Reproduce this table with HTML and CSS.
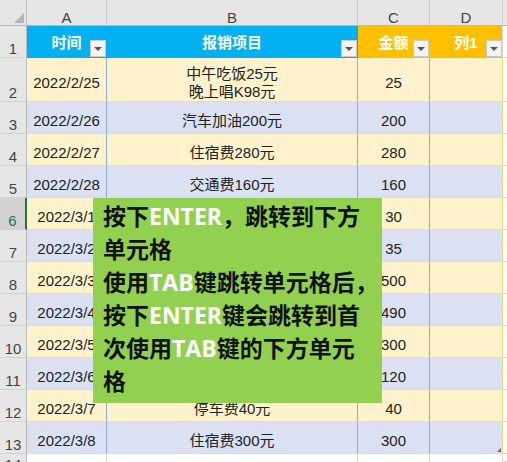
FILE: index.html
```html
<!DOCTYPE html>
<html lang="zh-CN">
<head>
<meta charset="utf-8">
<title>报销表</title>
<link rel="stylesheet" href="styles.css">
</head>
<body>
<div class="sheet">
  <div class="corner"><span class="tri"></span></div>
  <div class="colhead">A</div>
  <div class="colhead">B</div>
  <div class="colhead">C</div>
  <div class="colhead">D</div>
  <div class="colhead colhead-e"></div>

  <div class="rowhead">1</div>
  <div class="th blue-h">时间<span class="filter"></span></div>
  <div class="th blue-h">报销项目<span class="filter"></span></div>
  <div class="th orange-h">金额<span class="filter"></span></div>
  <div class="th orange-h last">列1<span class="filter"></span></div>
  <div class="ecell"></div>

  <div class="rowhead">2</div>
  <div class="td y">2022/2/25</div>
  <div class="td y two">中午吃饭25元<br>晚上唱K98元</div>
  <div class="td y">25</div>
  <div class="td y last"></div>
  <div class="ecell"></div>

  <div class="rowhead">3</div>
  <div class="td b">2022/2/26</div>
  <div class="td b">汽车加油200元</div>
  <div class="td b">200</div>
  <div class="td b last"></div>
  <div class="ecell"></div>

  <div class="rowhead">4</div>
  <div class="td y">2022/2/27</div>
  <div class="td y">住宿费280元</div>
  <div class="td y">280</div>
  <div class="td y last"></div>
  <div class="ecell"></div>

  <div class="rowhead">5</div>
  <div class="td b">2022/2/28</div>
  <div class="td b">交通费160元</div>
  <div class="td b">160</div>
  <div class="td b last"></div>
  <div class="ecell"></div>

  <div class="rowhead active">6</div>
  <div class="td y">2022/3/1</div>
  <div class="td y">餐费30元</div>
  <div class="td y">30</div>
  <div class="td y last"></div>
  <div class="ecell"></div>

  <div class="rowhead">7</div>
  <div class="td b">2022/3/2</div>
  <div class="td b">打车费35元</div>
  <div class="td b">35</div>
  <div class="td b last"></div>
  <div class="ecell"></div>

  <div class="rowhead">8</div>
  <div class="td y">2022/3/3</div>
  <div class="td y">住宿费500元</div>
  <div class="td y">500</div>
  <div class="td y last"></div>
  <div class="ecell"></div>

  <div class="rowhead">9</div>
  <div class="td b">2022/3/4</div>
  <div class="td b">机票490元</div>
  <div class="td b">490</div>
  <div class="td b last"></div>
  <div class="ecell"></div>

  <div class="rowhead">10</div>
  <div class="td y">2022/3/5</div>
  <div class="td y">住宿费300元</div>
  <div class="td y">300</div>
  <div class="td y last"></div>
  <div class="ecell"></div>

  <div class="rowhead">11</div>
  <div class="td b">2022/3/6</div>
  <div class="td b">餐费120元</div>
  <div class="td b">120</div>
  <div class="td b last"></div>
  <div class="ecell"></div>

  <div class="rowhead">12</div>
  <div class="td y">2022/3/7</div>
  <div class="td y">停车费40元</div>
  <div class="td y">40</div>
  <div class="td y last"></div>
  <div class="ecell"></div>

  <div class="rowhead">13</div>
  <div class="td b">2022/3/8</div>
  <div class="td b">住宿费300元</div>
  <div class="td b">300</div>
  <div class="td b last corner-cell"><span class="resize"></span></div>
  <div class="ecell"></div>

  <div class="rowhead partial">14</div>
  <div class="wcell"></div>
  <div class="wcell"></div>
  <div class="wcell"></div>
  <div class="wcell"></div>
  <div class="ecell"></div>

  <div class="note">
    <p>按下<span class="hl">ENTER</span>，跳转到下方<br>单元格<br>使用<span class="hl">TAB</span>键跳转单元格后，<br>按下<span class="hl">ENTER</span>键会跳转到首<br>次使用<span class="hl">TAB</span>键的下方单元<br>格</p>
  </div>
</div>
</body>
</html>
```

FILE: styles.css
```css
html, body {
  margin: 0;
  padding: 0;
}

body {
  width: 507px;
  height: 462px;
  overflow: hidden;
  background: #ffffff;
  font-family: "Liberation Sans", "Noto Sans CJK SC", sans-serif;
  font-size: 15px;
  color: #222;
}

.sheet {
  position: relative;
  height: 462px;
  overflow: hidden;
  display: grid;
  grid-template-columns: 27px 80px 251px 72px 73px 1fr;
  grid-template-rows: 26px 32px 44px repeat(11, 32px) 1fr;
}

.sheet > div {
  box-sizing: border-box;
  display: flex;
  overflow: hidden;
  white-space: nowrap;
}

.corner {
  background: #e6e6e6;
  border-right: 1px solid #b9b9b9;
  border-bottom: 1px solid #b9b9b9;
  align-items: flex-end;
  justify-content: flex-end;
  padding: 0 2px 2px 0;
}

.tri {
  width: 10px;
  height: 10px;
  background: #b4b4b4;
  clip-path: polygon(100% 0, 100% 100%, 0 100%);
}

.colhead {
  background: #e6e6e6;
  border-right: 1px solid #cdcdcd;
  border-bottom: 1px solid #b9b9b9;
  justify-content: center;
  align-items: flex-start;
  padding-top: 10px;
  line-height: 15px;
  color: #444;
  font-size: 15px;
}

.colhead-e {
  border-right: none;
}

.rowhead {
  background: #e6e6e6;
  border-right: 1px solid #b9b9b9;
  border-bottom: 1px solid #d2d2d2;
  justify-content: center;
  align-items: flex-end;
  padding-bottom: 1px;
  line-height: 15px;
  color: #444;
  font-size: 15px;
}

.rowhead.active {
  background: #d2d2d2;
  color: #217346;
  border-right: 2px solid #217346;
}

.rowhead.partial {
  align-items: flex-start;
  padding-top: 3px;
  padding-bottom: 0;
  border-bottom: none;
}

.th {
  position: relative;
  justify-content: center;
  align-items: center;
  color: #ffffff;
  font-weight: 700;
  font-size: 15px;
  padding-bottom: 1px;
}

.blue-h {
  background: #00b0f0;
  border-right: 1px solid #00b0f0;
  border-bottom: 1px solid #00b0f0;
}

.orange-h {
  background: #ffc000;
  border-right: 1px solid #ffc000;
  border-bottom: 1px solid #ffc000;
}

.orange-h.last {
  border-right: 1px solid #d9d9d9;
}

.filter {
  position: absolute;
  right: 0;
  bottom: 0;
  width: 16px;
  height: 17px;
  box-sizing: border-box;
  background: #f3f3f3;
  border: 1px solid #c9c9c9;
  display: flex;
  align-items: center;
  justify-content: center;
}

.filter::after {
  content: "";
  width: 0;
  height: 0;
  border-left: 4px solid transparent;
  border-right: 4px solid transparent;
  border-top: 4px solid #555;
  margin-top: 1px;
}

.td {
  justify-content: center;
  align-items: center;
  padding-top: 6px;
  line-height: 17px;
  border-right: 1px solid #8ea9db;
  border-bottom: 1px solid #f9dc8a;
  color: #222;
}

.td.two {
  text-align: center;
  line-height: 18px;
  white-space: normal;
}

.td.last {
  border-right: 1px solid #f6d878;
}

.y {
  background: #fff2cc;
}

.b {
  background: #d9e1f2;
}

.corner-cell {
  position: relative;
}

.resize {
  position: absolute;
  right: 1px;
  bottom: 1px;
  width: 4px;
  height: 4px;
  background: #666;
  clip-path: polygon(100% 0, 100% 100%, 0 100%);
}

.ecell {
  border-bottom: 1px solid #dadada;
}

.wcell {
  border-right: 1px solid #dadada;
}

.note {
  position: absolute;
  left: 93px;
  top: 198px;
  width: 289px;
  height: 205px;
  box-sizing: border-box;
  background: #92d050;
  padding: 2px 0 0 10px;
}

.note p {
  margin: 0;
  font-family: "Open Sans", "Noto Sans CJK SC", sans-serif;
  font-weight: 700;
  font-size: 23px;
  line-height: 33px;
  color: #111;
  white-space: nowrap;
}

.hl {
  color: #ffffff;
}
```
